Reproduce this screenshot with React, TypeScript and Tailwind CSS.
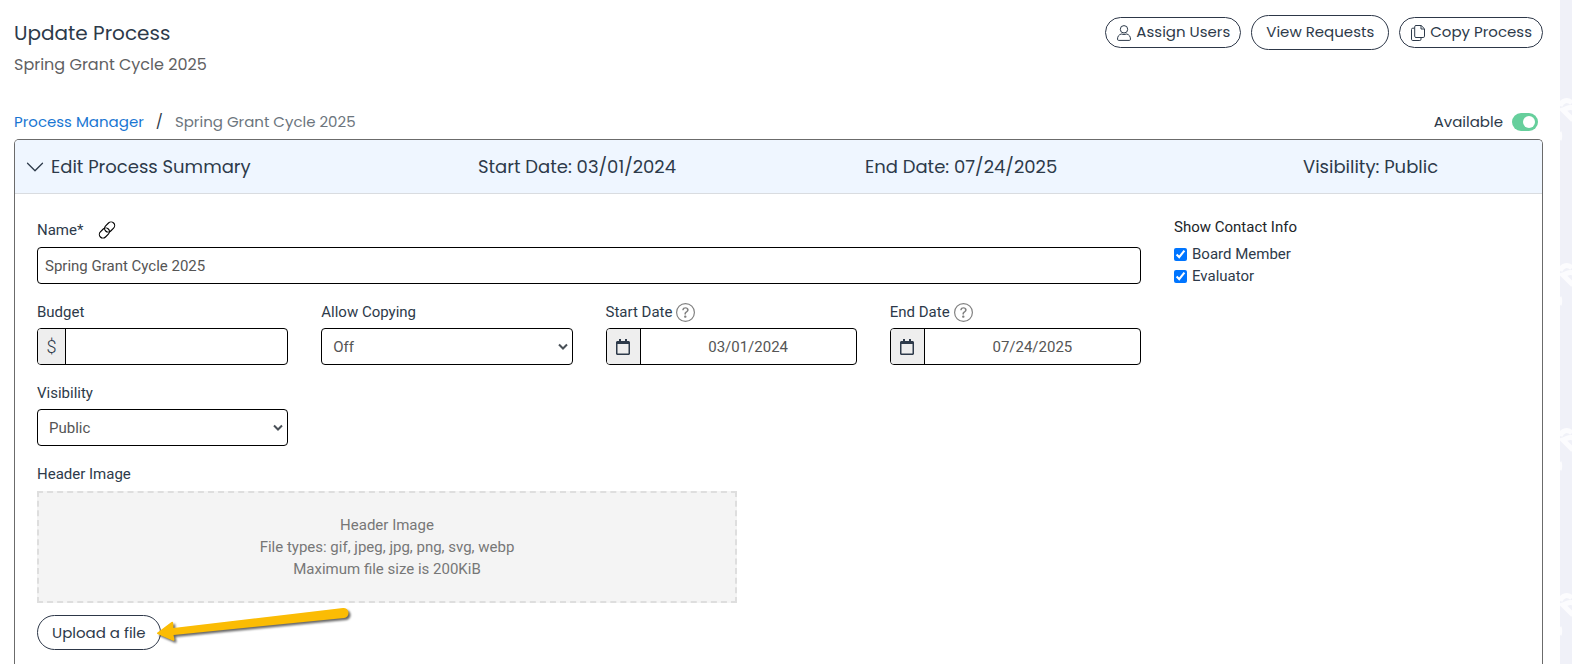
import React from "react";
import { BsChevronDown, BsQuestionCircle } from "react-icons/bs";
import { FaRegCalendar } from "react-icons/fa";

const field = "h-[37px] rounded border border-black bg-white text-[15px] text-[#555555]";
const pill =
  "flex items-center gap-1 rounded-full border border-[#2d3748] bg-white text-[15px] text-[#2d3a4a]";

function PersonIcon() {
  return (
    <svg viewBox="0 0 16 16" className="size-4" fill="none" stroke="currentColor" aria-hidden="true">
      <circle cx="8" cy="4.3" r="3.7" />
      <path d="M5.2 9C3 9.6 1.5 11.3 1.5 14.2Q1.5 15.4 2.7 15.4H13.3Q14.5 15.4 14.5 14.2C14.5 11.3 13 9.6 10.8 9Q8 10 5.2 9Z" />
    </svg>
  );
}

function CopyIcon() {
  return (
    <svg viewBox="0 0 16 16" className="size-4" fill="none" stroke="currentColor" aria-hidden="true">
      <path d="M6 .5H11.2L14.5 3.8V11.2Q14.5 12.5 13.2 12.5H6Q4.7 12.5 4.7 11.2V1.8Q4.7 .5 6 .5Z" />
      <path d="M11 .7V4H14.3" />
      <path d="M4.5 3.2H2.8Q1.5 3.2 1.5 4.5V14.2Q1.5 15.5 2.8 15.5H9.8Q11 15.5 11 14.2V12.7" />
    </svg>
  );
}

function LinkIcon() {
  return (
    <svg viewBox="0 0 24 24" className="h-[18px] w-[18px]" fill="none" stroke="#000" strokeWidth="1.5" aria-hidden="true">
      <rect x="8" y="3.2" width="15" height="9.6" rx="4.8" transform="rotate(-45 15.5 8)" />
      <rect x="1" y="11.2" width="15" height="9.6" rx="4.8" transform="rotate(-45 8.5 16)" />
    </svg>
  );
}

function SelectBox({ id, value }: { id: string; value: string }) {
  return (
    <div className="relative">
      <select id={id} defaultValue={value} className={`${field} w-full appearance-none px-[11px]`}>
        <option>{value}</option>
      </select>
      <svg
        viewBox="0 0 12 8"
        className="pointer-events-none absolute top-[15px] right-1 h-2 w-3"
        fill="none"
        stroke="#495057"
        strokeWidth="2"
        aria-hidden="true"
      >
        <path d="M2 1.5 6 5.5 10 1.5" />
      </svg>
    </div>
  );
}

function DateField({ id, label, value }: { id: string; label: string; value: string }) {
  return (
    <div className="flex flex-col gap-[5px]">
      <div className="flex h-[22px] items-center gap-1">
        <label htmlFor={id}>{label}</label>
        <BsQuestionCircle className="size-[19px] text-[#808080]" />
      </div>
      <div className={`${field} flex overflow-hidden`}>
        <span className="flex w-[34px] shrink-0 items-center justify-center border-r border-black bg-[#eeeeee]">
          <FaRegCalendar className="size-4 text-[#2d3a4a]" />
        </span>
        <input id={id} defaultValue={value} className="w-full min-w-0 text-center outline-none" />
      </div>
    </div>
  );
}

function Watermark() {
  return (
    <svg className="h-full w-full" aria-hidden="true">
      <defs>
        <pattern id="mark" width="12" height="165" y="90" patternUnits="userSpaceOnUse">
          <g fill="none" stroke="#fff" strokeWidth="5" opacity="0.8">
            <path d="M0 16C2 10 8 9 12 13M13 18C9 16 7 19 3 20L13 30" />
            <path d="M0 42C1 44 1 48 0 50" strokeWidth="3" />
          </g>
        </pattern>
      </defs>
      <rect width="100%" height="100%" fill="url(#mark)" />
    </svg>
  );
}

export default function App() {
  return (
    <div className="flex min-h-screen bg-[#f0f1f8] font-['Poppins','Inter',sans-serif] text-[#2d3a4a]">
      <main className="flex min-w-0 flex-1 flex-col bg-white pr-[17px] pl-[14px]">
        <header className="flex items-start justify-between pt-[15px]">
          <div className="pt-[3px]">
            <h1 className="text-xl leading-[30px]">Update Process</h1>
            <p className="pt-1 text-base leading-[26px] text-[#5f6163]">Spring Grant Cycle 2025</p>
          </div>
          <div className="flex items-center gap-[10px]">
            <button className={`${pill} h-[31px] px-[10px]`}>
              <PersonIcon />
              Assign Users
            </button>
            <button className={`${pill} h-[35px] px-[14px]`}>View Requests</button>
            <button className={`${pill} h-[31px] px-[10px]`}>
              <CopyIcon />
              Copy Process
            </button>
          </div>
        </header>

        <div className="flex items-center justify-between pt-8 pb-[5px] text-[15px] leading-6">
          <nav className="flex">
            <a href="#" className="text-[#1976d2]">Process Manager</a>
            <span className="px-3">/</span>
            <span className="text-[#6c757d]">Spring Grant Cycle 2025</span>
          </nav>
          <label className="flex items-center gap-[9px] pr-[5px]">
            Available
            <span className="relative h-[18px] w-[26px]">
              <input
                type="checkbox"
                defaultChecked
                className="block h-[18px] w-[26px] appearance-none rounded-full bg-[#66cf9c]"
              />
              <span className="absolute top-[3px] right-[3px] size-3 rounded-full bg-white" />
            </span>
          </label>
        </div>

        <section className="flex-1 rounded-t-[5px] border border-b-0 border-[#6b6b6b] pb-3">
          <div className="grid h-[54px] grid-cols-[453fr_387fr_438fr_239fr] items-center rounded-t border-b border-[#d9dce0] bg-[#eff6ff] pl-[10px] text-lg">
            <button className="flex items-center gap-[6px] text-left">
              <BsChevronDown className="size-5" />
              Edit Process Summary
            </button>
            <span>Start Date: 03/01/2024</span>
            <span>End Date: 07/24/2025</span>
            <span>Visibility: Public</span>
          </div>

          <div className="grid grid-cols-[3fr_1fr] gap-[33px] pt-[22px] pl-[22px] font-['Roboto',sans-serif] text-[15px] leading-[22px]">
            <div className="min-w-0 pt-[3px]">
              <div className="flex h-[22px] items-center gap-[15px]">
                <label htmlFor="name">Name*</label>
                <LinkIcon />
              </div>
              <input id="name" defaultValue="Spring Grant Cycle 2025" className={`${field} mt-[6px] w-full px-[7px]`} />

              <div className="mt-[17px] grid grid-cols-4 gap-x-[33px] gap-y-[17px]">
                <div className="flex flex-col gap-[5px]">
                  <label htmlFor="budget">Budget</label>
                  <div className={`${field} flex overflow-hidden`}>
                    <span className="flex w-7 shrink-0 items-center justify-center border-r border-black bg-[#eeeeee] text-lg font-light text-[#2d3a4a]">
                      $
                    </span>
                    <input id="budget" className="w-full min-w-0 px-2 outline-none" />
                  </div>
                </div>
                <div className="flex flex-col gap-[5px]">
                  <label htmlFor="copying">Allow Copying</label>
                  <SelectBox id="copying" value="Off" />
                </div>
                <DateField id="start" label="Start Date" value="03/01/2024" />
                <DateField id="end" label="End Date" value="07/24/2025" />
                <div className="flex flex-col gap-[5px]">
                  <label htmlFor="visibility">Visibility</label>
                  <SelectBox id="visibility" value="Public" />
                </div>
              </div>

              <div className="mt-[17px]">Header Image</div>
              <div className="mt-[6px] max-w-[700px] border-2 border-dashed border-[#dedede] bg-[#f4f4f4] py-[21px] text-center text-[#777]">
                <p>Header Image</p>
                <p>File types: gif, jpeg, jpg, png, svg, webp</p>
                <p>Maximum file size is 200KiB</p>
              </div>
              <div className="relative mt-3">
                <button className={`${pill} h-[35px] px-[14px] font-['Poppins','Inter',sans-serif]`}>Upload a file</button>
                <svg viewBox="0 0 210 50" className="absolute -top-[15px] left-[113px] h-[50px] w-[210px]" aria-hidden="true">
                  <path
                    d="M7.5 32.5 21.500 22Q23 21 23.2 23L23.5 28 193 8A5 5 0 0 1 194 18L23.5 35 24.5 39.5Q24.5 41.5 22.5 40.5L7.5 34Q6.5 33.2 7.5 32.5Z"
                    fill="#fbbc04"
                    className="drop-shadow-[2px_2px_1px_rgba(0,0,0,0.6)]"
                  />
                </svg>
              </div>
            </div>

            <fieldset className="text-[#2d3a4a]">
              <legend className="mb-[5px] text-[#212529]">Show Contact Info</legend>
              {["Board Member", "Evaluator"].map((role) => (
                <label key={role} className="flex items-center gap-[5px]">
                  <input type="checkbox" defaultChecked className="size-[13px] accent-[#0075ff]" />
                  {role}
                </label>
              ))}
            </fieldset>
          </div>
        </section>
      </main>
      <aside className="w-3 shrink-0">
        <Watermark />
      </aside>
    </div>
  );
}
